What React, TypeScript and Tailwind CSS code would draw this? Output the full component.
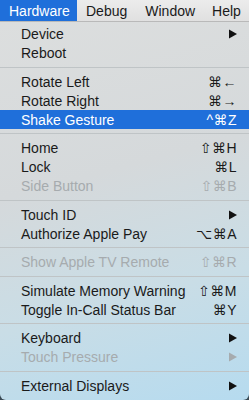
import React from "react";

type Item =
  | { sep: true; tight?: boolean }
  | { label: string; key?: string; sub?: boolean; disabled?: boolean; active?: boolean };

const items: Item[] = [
  { label: "Device", sub: true },
  { label: "Reboot" },
  { sep: true },
  { label: "Rotate Left", key: "⌘←" },
  { label: "Rotate Right", key: "⌘→" },
  { label: "Shake Gesture", key: "^⌘Z", active: true },
  { sep: true, tight: true },
  { label: "Home", key: "⇧⌘H" },
  { label: "Lock", key: "⌘L" },
  { label: "Side Button", key: "⇧⌘B", disabled: true },
  { sep: true },
  { label: "Touch ID", sub: true },
  { label: "Authorize Apple Pay", key: "⌥⌘A" },
  { sep: true, tight: true },
  { label: "Show Apple TV Remote", key: "⇧⌘R", disabled: true },
  { sep: true },
  { label: "Simulate Memory Warning", key: "⇧⌘M" },
  { label: "Toggle In-Call Status Bar", key: "⌘Y" },
  { sep: true, tight: true },
  { label: "Keyboard", sub: true },
  { label: "Touch Pressure", sub: true, disabled: true },
  { sep: true },
  { label: "External Displays", sub: true },
];

function Arrow({ color }: { color: string }) {
  return (
    <svg width="8" height="10" viewBox="0 0 8 10">
      <path d="M0 0.5 L8 5 L0 9.5 Z" fill={color} />
    </svg>
  );
}

export default function App() {
  return (
    <div
      className="w-[249px] h-[400px] overflow-hidden bg-[#3a4a55] text-[14px] leading-none"
      style={{ fontFamily: '"Liberation Sans", "DejaVu Sans", sans-serif' }}
    >
      {/* menu bar */}
      <div className="flex h-[22px] items-center border-b border-[#b9b9b9] bg-[linear-gradient(#ececec,#e0e0e0)] text-[#1a1a1a]">
        <div className="flex h-full w-[77px] items-center bg-[#1f6fda] pl-[9px] text-white">Hardware</div>
        <div className="pl-[9px]">Debug</div>
        <div className="pl-[18px]">Window</div>
        <div className="pl-[17px]">Help</div>
      </div>

      {/* dropdown */}
      <div className="h-[378px] rounded-b-[6px] bg-[linear-gradient(165deg,#dcdede_0%,#d5d9db_40%,#c9dde6_70%,#b6dbef_100%)] pt-[2px]">
        {items.map((it, i) =>
          "sep" in it ? (
            <div key={i} className={"flex items-center " + (it.tight ? "h-[9px]" : "h-[10px]")}>
              <div className="h-px w-full bg-[#bfc4c6]" />
            </div>
          ) : (
            <div
              key={i}
              className={
                "flex h-[19px] items-center justify-between pl-[21px] pr-[12px] " +
                (it.active
                  ? "bg-[#1f6fda] text-white"
                  : it.disabled
                  ? "text-[#a6abae]"
                  : "text-[#1a1a1a]")
              }
            >
              <span>{it.label}</span>
              {it.key && <span className="tracking-[0.5px]">{it.key}</span>}
              {it.sub && <Arrow color={it.disabled ? "#a6abae" : "#111"} />}
            </div>
          )
        )}
      </div>
    </div>
  );
}
